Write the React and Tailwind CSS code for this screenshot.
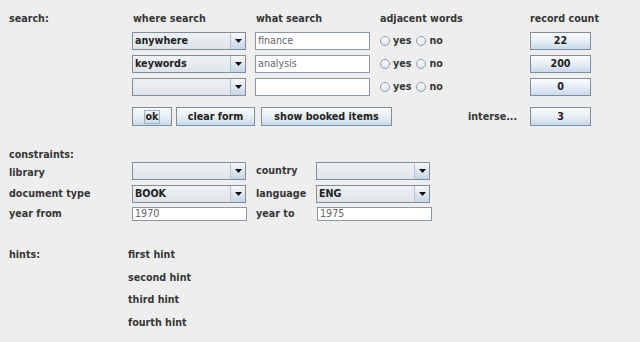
import React from "react";

function Combo({ value, extra = "" }) {
  return (
    <div className={"flex w-[114px] h-[18px] border border-[#7f8e9d] shrink-0 " + extra}>
      <div className="flex-1 flex items-center pl-[2px] bg-linear-to-b from-[#eef1f4] to-[#dfe4ea] text-[#222]">
        {value}
      </div>
      <div className="w-[15px] flex items-center justify-center border-l border-[#b4c2cf] bg-linear-to-b from-[#f7f9fb] to-[#c5d6e6]">
        <svg width="7" height="4" viewBox="0 0 7 4">
          <path d="M0 0H7L3.5 4Z" fill="#111" />
        </svg>
      </div>
    </div>
  );
}

function Field({ value, h = "h-[18px]" }) {
  return (
    <div className={"w-[115px] shrink-0 flex items-center pl-[2px] bg-white border border-[#8a98a6] font-normal text-[#666] " + h}>
      {value}
    </div>
  );
}

function Btn({ children, w, h = "h-[19px]" }) {
  return (
    <div className={"flex items-center justify-center border border-[#7f8e9d] bg-linear-to-b from-[#fbfcfe] via-[#e6eef6] to-[#c8d9ea] text-[#222] shrink-0 " + w + " " + h}>
      {children}
    </div>
  );
}

function Radio({ label }) {
  return (
    <div className="flex items-center">
      <div className="w-[10px] h-[10px] rounded-full border border-[#8d9bab] bg-linear-to-b from-[#ffffff] to-[#dbe5ef]" />
      <span className="ml-[3px]">{label}</span>
    </div>
  );
}

function SearchRow({ combo, text, count }) {
  return (
    <div className="flex items-center pl-[132px] h-[18px]">
      <Combo value={combo} />
      <div className="ml-[9px]">
        <Field value={text} />
      </div>
      <div className="ml-[10px] w-[150px] flex items-center gap-[5px]">
        <Radio label="yes" />
        <Radio label="no" />
      </div>
      <Btn w="w-[61px]" h="h-[18px]">{count}</Btn>
    </div>
  );
}

export default function App() {
  return (
    <div className="w-[640px] h-[342px] overflow-hidden bg-[#eeeeee] text-[#363636] font-bold text-[9.6px] leading-[14px] font-['DejaVu_Sans',sans-serif] pt-[12px]">
      {/* header */}
      <div className="flex h-[14px] pl-[9px]">
        <span className="w-[124px]">search:</span>
        <span className="w-[123px]">where search</span>
        <span className="w-[124px]">what search</span>
        <span className="w-[150px]">adjacent words</span>
        <span>record count</span>
      </div>

      <div className="mt-[6px] flex flex-col gap-[5px]">
        <SearchRow combo="anywhere" text="finance" count="22" />
        <SearchRow combo="keywords" text="analysis" count="200" />
        <SearchRow combo="" text="" count="0" />
      </div>

      {/* buttons row */}
      <div className="mt-[11px] flex items-center pl-[132px] h-[19px]">
        <Btn w="w-[40px]">
          <span className="border border-[#9fb2c6] px-[1px] leading-[12px]">ok</span>
        </Btn>
        <div className="ml-[4px]">
          <Btn w="w-[79px]">clear form</Btn>
        </div>
        <div className="ml-[6px]">
          <Btn w="w-[131px]">show booked items</Btn>
        </div>
        <span className="ml-[76px] w-[62px]">interse...</span>
        <Btn w="w-[61px]">3</Btn>
      </div>

      {/* constraints */}
      <div className="mt-[22px] pl-[9px] h-[14px]">constraints:</div>
      <div className="flex flex-col">
        <div className="flex items-center h-[18px]">
          <span className="pl-[9px] w-[132px] mt-[4px]">library</span>
          <Combo value="" />
          <span className="ml-[10px] w-[60px]">country</span>
          <Combo value="" />
        </div>
        <div className="mt-[5px] flex items-center h-[18px]">
          <span className="pl-[9px] w-[132px]">document type</span>
          <Combo value="BOOK" />
          <span className="ml-[10px] w-[60px]">language</span>
          <Combo value="ENG" />
        </div>
        <div className="mt-[4px] flex items-center h-[14px]">
          <span className="pl-[9px] w-[132px]">year from</span>
          <Field value="1970" h="h-[14px]" />
          <span className="ml-[9px] w-[61px]">year to</span>
          <Field value="1975" h="h-[14px]" />
        </div>
      </div>

      {/* hints */}
      <div className="mt-[27px] flex pl-[9px]">
        <span className="w-[119px]">hints:</span>
        <div className="flex flex-col">
          <div className="h-[22.7px]">first hint</div>
          <div className="h-[22.7px]">second hint</div>
          <div className="h-[22.7px]">third hint</div>
          <div className="h-[22.7px]">fourth hint</div>
        </div>
      </div>
    </div>
  );
}
